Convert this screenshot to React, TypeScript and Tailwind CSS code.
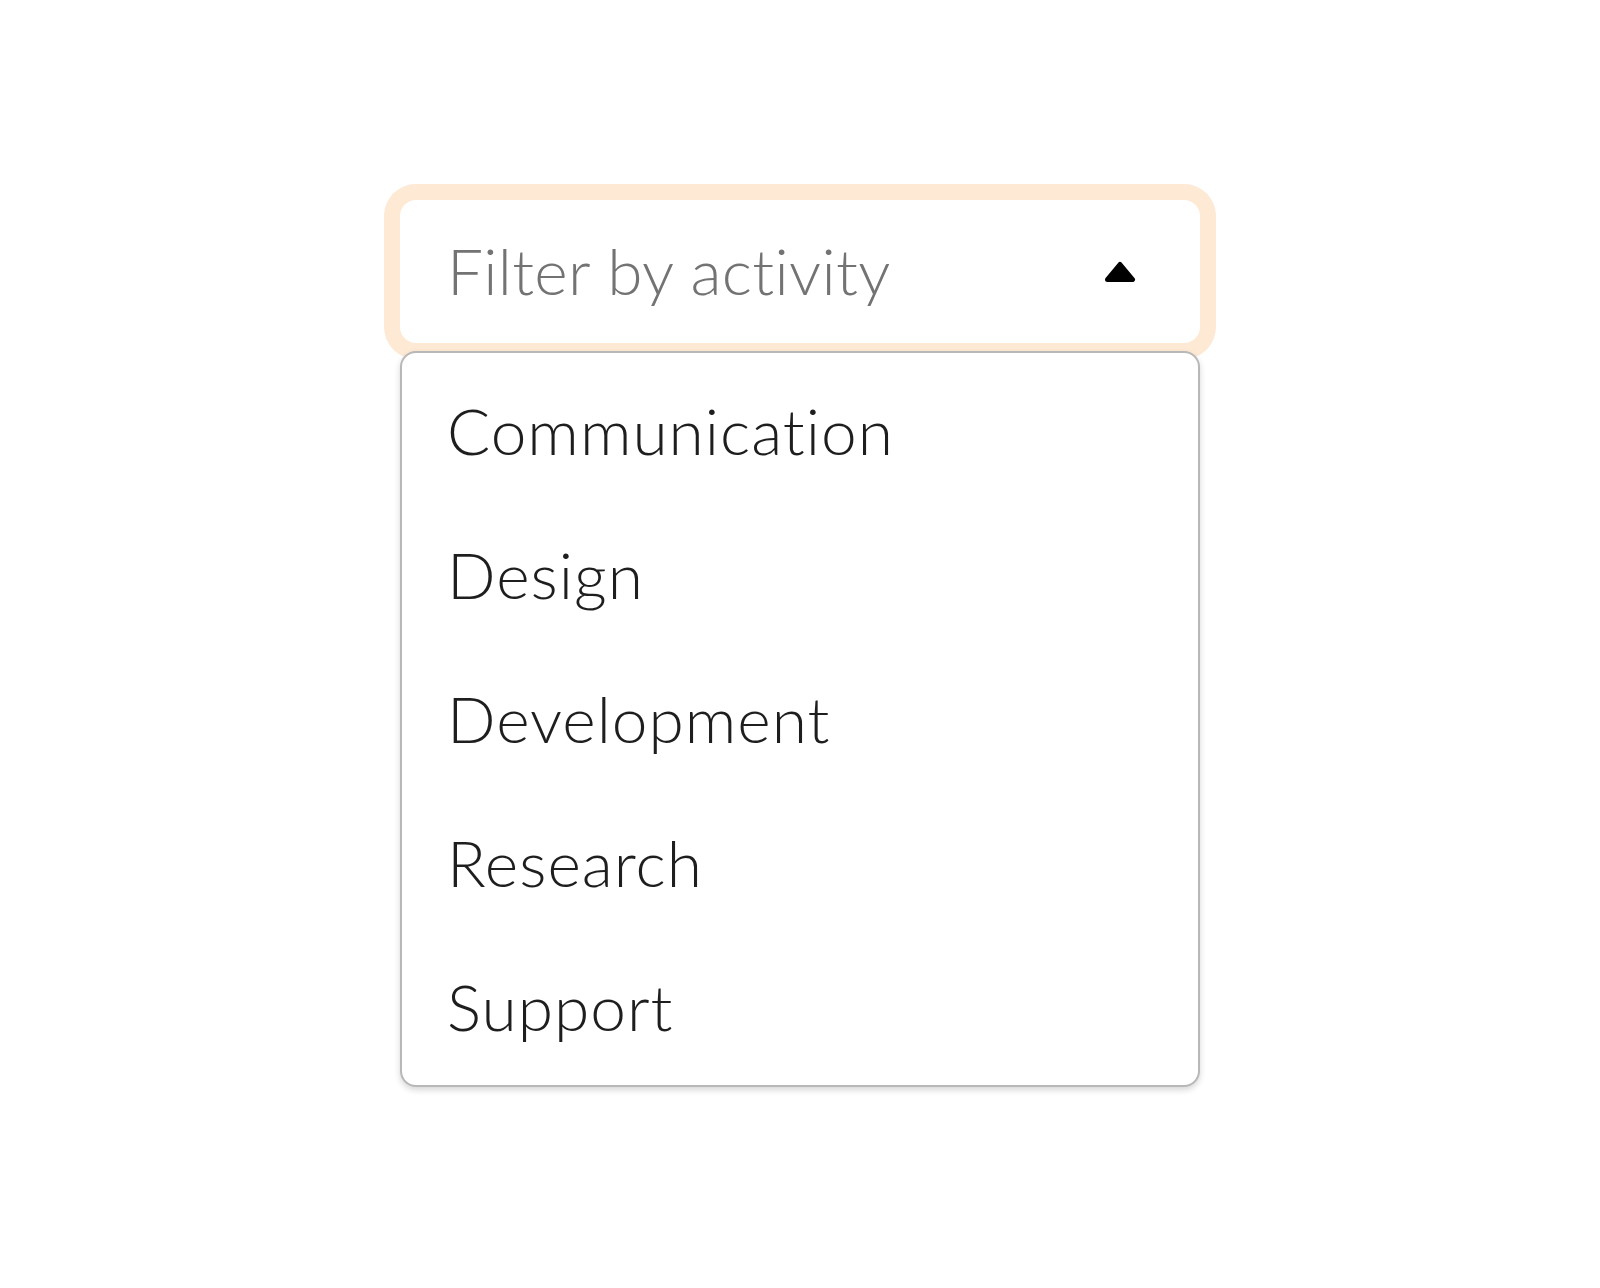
const activities = ["Communication", "Design", "Development", "Research", "Support"];

const CaretUp = () => (
  <svg width="32" height="22" viewBox="0 0 32 22" aria-hidden="true">
    <polygon
      points="16,3.5 28.5,18.5 3.5,18.5"
      fill="#000"
      stroke="#000"
      strokeWidth="5"
      strokeLinejoin="round"
    />
  </svg>
);

const ActivityFilter = () => {
  return (
    <div className="relative w-[800px]">
      <button
        type="button"
        className="flex h-[143px] w-full items-center justify-between rounded-2xl bg-white pl-[47px] pr-16 text-left ring-[16px] ring-[#fde9d4]"
      >
        <span className="text-[64px] font-light leading-[1.2] tracking-[0.3px] text-[#737373] [font-variant-ligatures:none]">
          Filter by activity
        </span>
        <CaretUp />
      </button>
      <ul className="absolute left-0 top-full z-10 mt-2 w-full rounded-2xl border-2 border-[#b8b8b8] bg-white py-[6px] shadow-[0_3px_6px_rgba(0,0,0,0.16)]">
        {activities.map((activity) => (
          <li
            key={activity}
            className="flex h-[144px] items-center pl-[45px] pr-12 text-[64px] font-light leading-[1.2] tracking-[1px] text-[#1e1e1e] [font-variant-ligatures:none]"
          >
            {activity}
          </li>
        ))}
      </ul>
    </div>
  );
};

export default function App() {
  return (
    <main
      className="flex min-h-[1288px] items-start justify-center bg-white pt-[200px]"
      style={{ fontFamily: "Lato, 'Open Sans', sans-serif" }}
    >
      <ActivityFilter />
    </main>
  );
}
